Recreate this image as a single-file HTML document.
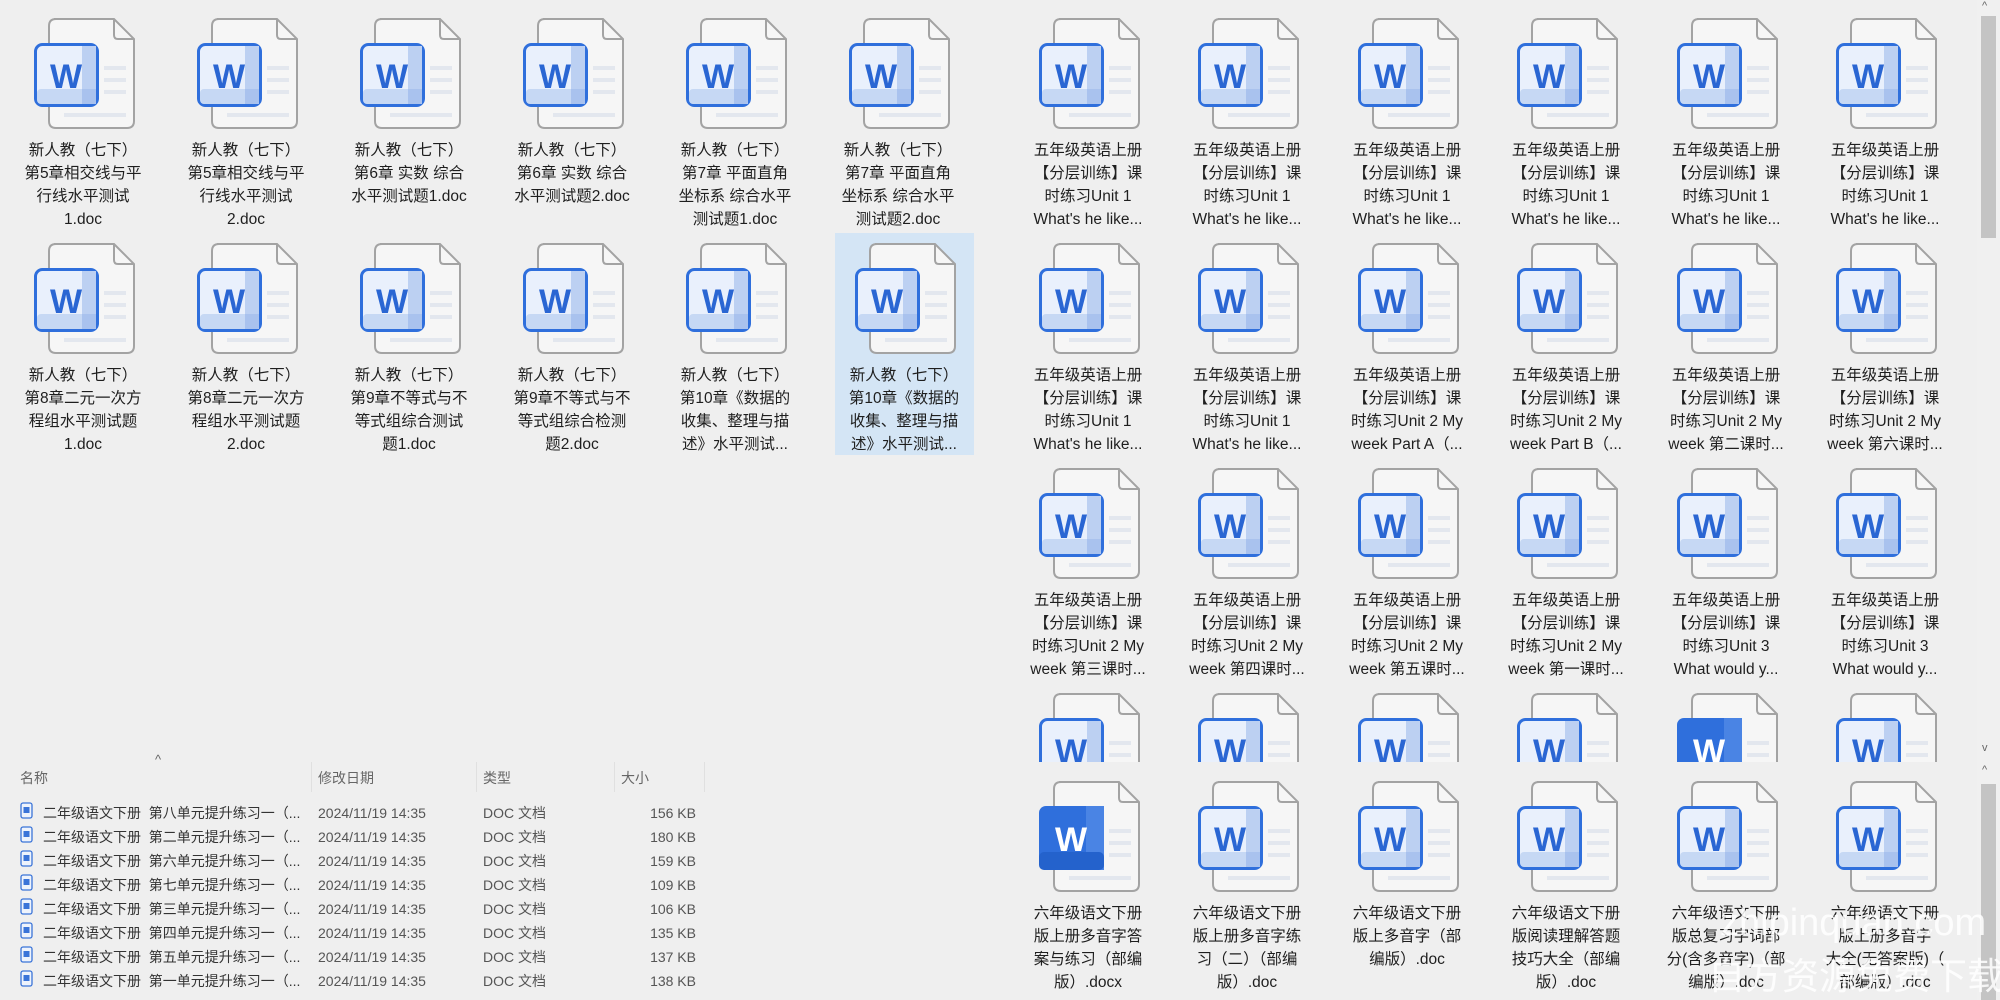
<!DOCTYPE html>
<html><head><meta charset="utf-8"><style>
*{margin:0;padding:0;box-sizing:border-box}
body{width:2000px;height:1000px;background:#efefef;position:relative;overflow:hidden;font-family:"Liberation Sans","Noto Sans CJK SC",sans-serif;color:#1e1e1e}
.p{position:absolute;overflow:hidden}
.c{position:absolute;width:140px;height:220px}
.c svg{position:absolute;left:21px;top:0;width:104px;height:112px;overflow:visible}
.t{position:absolute;left:0;top:121px;width:140px;text-align:center;font-size:15.5px;line-height:23px;white-space:nowrap}
.lst{position:absolute;font-size:14px;color:#333;white-space:nowrap}
.hd{position:absolute;font-size:14px;color:#666}
.sep{position:absolute;top:762px;width:1px;height:30px;background:#e0e0e0}
</style></head><body>
<svg width="0" height="0" style="position:absolute">
<defs>
<g id="doc">
<path d="M20 1 H80 L100 21 V103 Q100 110 93 110 H22 Q15 110 15 103 V8 Q15 1 22 1 Z" fill="#f6f6f6" stroke="#a3a3a3" stroke-width="2"/>
<path d="M80 1 V17 Q80 21 84 21 H100" fill="none" stroke="#a3a3a3" stroke-width="2"/>
<path d="M70 50H92M70 62H92M70 74H92M30 97H92" stroke="#e3e7ee" stroke-width="4"/>
</g>
<g id="bdg">
<rect x="1.5" y="26.5" width="62" height="61" rx="7" fill="#e9f0fc" stroke="#2f6fdc" stroke-width="3"/>
<rect x="48" y="28" width="14" height="58" fill="#bcd0f2"/>
<rect x="3" y="71" width="59" height="15" rx="4" fill="#c6d8f4"/>
<rect x="48" y="71" width="14" height="15" fill="#a9c2ee"/>
</g>
<g id="bds">
<rect x="0" y="25" width="65" height="64" rx="7" fill="#2f6fdc"/>
<rect x="47" y="25" width="18" height="64" fill="#4a84e4"/>
<rect x="0" y="71" width="65" height="18" rx="5" fill="#2462cc"/>
</g>
<g id="li"><rect x="1" y="1" width="11" height="15" rx="2" fill="#eef3fc" stroke="#3a74d8" stroke-width="1.3"/><rect x="3.5" y="5" width="6" height="6" fill="#3a74d8"/></g>
</defs></svg>

<!-- LEFT TOP PANEL -->
<div class="p" style="left:0;top:0;width:1000px;height:750px">
<div class="c" style="left:13px;top:18px"><svg><use href="#doc"/><use href="#bdg"/><text x="32" y="70" text-anchor="middle" font-size="34" font-weight="bold" fill="#2a66d3" font-family="Liberation Sans">W</text></svg><div class="t">新人教（七下）<br>第5章相交线与平<br>行线水平测试<br>1.doc</div></div>
<div class="c" style="left:176px;top:18px"><svg><use href="#doc"/><use href="#bdg"/><text x="32" y="70" text-anchor="middle" font-size="34" font-weight="bold" fill="#2a66d3" font-family="Liberation Sans">W</text></svg><div class="t">新人教（七下）<br>第5章相交线与平<br>行线水平测试<br>2.doc</div></div>
<div class="c" style="left:339px;top:18px"><svg><use href="#doc"/><use href="#bdg"/><text x="32" y="70" text-anchor="middle" font-size="34" font-weight="bold" fill="#2a66d3" font-family="Liberation Sans">W</text></svg><div class="t">新人教（七下）<br>第6章 实数 综合<br>水平测试题1.doc</div></div>
<div class="c" style="left:502px;top:18px"><svg><use href="#doc"/><use href="#bdg"/><text x="32" y="70" text-anchor="middle" font-size="34" font-weight="bold" fill="#2a66d3" font-family="Liberation Sans">W</text></svg><div class="t">新人教（七下）<br>第6章 实数 综合<br>水平测试题2.doc</div></div>
<div class="c" style="left:665px;top:18px"><svg><use href="#doc"/><use href="#bdg"/><text x="32" y="70" text-anchor="middle" font-size="34" font-weight="bold" fill="#2a66d3" font-family="Liberation Sans">W</text></svg><div class="t">新人教（七下）<br>第7章 平面直角<br>坐标系 综合水平<br>测试题1.doc</div></div>
<div class="c" style="left:828px;top:18px"><svg><use href="#doc"/><use href="#bdg"/><text x="32" y="70" text-anchor="middle" font-size="34" font-weight="bold" fill="#2a66d3" font-family="Liberation Sans">W</text></svg><div class="t">新人教（七下）<br>第7章 平面直角<br>坐标系 综合水平<br>测试题2.doc</div></div>

<div style="position:absolute;left:835px;top:233px;width:139px;height:222px;background:#d4e5f5"></div>
<div class="c" style="left:13px;top:243px"><svg><use href="#doc"/><use href="#bdg"/><text x="32" y="70" text-anchor="middle" font-size="34" font-weight="bold" fill="#2a66d3" font-family="Liberation Sans">W</text></svg><div class="t">新人教（七下）<br>第8章二元一次方<br>程组水平测试题<br>1.doc</div></div>
<div class="c" style="left:176px;top:243px"><svg><use href="#doc"/><use href="#bdg"/><text x="32" y="70" text-anchor="middle" font-size="34" font-weight="bold" fill="#2a66d3" font-family="Liberation Sans">W</text></svg><div class="t">新人教（七下）<br>第8章二元一次方<br>程组水平测试题<br>2.doc</div></div>
<div class="c" style="left:339px;top:243px"><svg><use href="#doc"/><use href="#bdg"/><text x="32" y="70" text-anchor="middle" font-size="34" font-weight="bold" fill="#2a66d3" font-family="Liberation Sans">W</text></svg><div class="t">新人教（七下）<br>第9章不等式与不<br>等式组综合测试<br>题1.doc</div></div>
<div class="c" style="left:502px;top:243px"><svg><use href="#doc"/><use href="#bdg"/><text x="32" y="70" text-anchor="middle" font-size="34" font-weight="bold" fill="#2a66d3" font-family="Liberation Sans">W</text></svg><div class="t">新人教（七下）<br>第9章不等式与不<br>等式组综合检测<br>题2.doc</div></div>
<div class="c" style="left:665px;top:243px"><svg><use href="#doc"/><use href="#bdg"/><text x="32" y="70" text-anchor="middle" font-size="34" font-weight="bold" fill="#2a66d3" font-family="Liberation Sans">W</text></svg><div class="t">新人教（七下）<br>第10章《数据的<br>收集、整理与描<br>述》水平测试...</div></div>
<div class="c" style="left:834px;top:243px"><svg><use href="#doc"/><use href="#bdg"/><text x="32" y="70" text-anchor="middle" font-size="34" font-weight="bold" fill="#2a66d3" font-family="Liberation Sans">W</text></svg><div class="t">新人教（七下）<br>第10章《数据的<br>收集、整理与描<br>述》水平测试...</div></div>
</div>

<!-- LEFT LOWER LIST -->
<div class="hd" style="left:20px;top:768px">名称</div>
<div class="hd" style="left:155px;top:752px;font-size:13px">^</div>
<div class="hd" style="left:318px;top:768px">修改日期</div>
<div class="hd" style="left:483px;top:768px">类型</div>
<div class="hd" style="left:621px;top:768px">大小</div>
<div class="sep" style="left:311px"></div><div class="sep" style="left:476px"></div><div class="sep" style="left:614px"></div><div class="sep" style="left:704px"></div>

<svg style="position:absolute;left:20px;top:802px" width="14" height="190">
<use href="#li"/><use href="#li" y="24"/><use href="#li" y="48"/><use href="#li" y="72"/><use href="#li" y="96"/><use href="#li" y="120"/><use href="#li" y="144"/><use href="#li" y="168"/>
</svg>
<div class="lst" style="left:43px;top:801px;line-height:24px">二年级语文下册&nbsp; 第八单元提升练习一（...<br>二年级语文下册&nbsp; 第二单元提升练习一（...<br>二年级语文下册&nbsp; 第六单元提升练习一（...<br>二年级语文下册&nbsp; 第七单元提升练习一（...<br>二年级语文下册&nbsp; 第三单元提升练习一（...<br>二年级语文下册&nbsp; 第四单元提升练习一（...<br>二年级语文下册&nbsp; 第五单元提升练习一（...<br>二年级语文下册&nbsp; 第一单元提升练习一（...</div>
<div class="lst" style="left:318px;top:801px;line-height:24px;color:#555">2024/11/19 14:35<br>2024/11/19 14:35<br>2024/11/19 14:35<br>2024/11/19 14:35<br>2024/11/19 14:35<br>2024/11/19 14:35<br>2024/11/19 14:35<br>2024/11/19 14:35</div>
<div class="lst" style="left:483px;top:801px;line-height:24px;color:#555">DOC 文档<br>DOC 文档<br>DOC 文档<br>DOC 文档<br>DOC 文档<br>DOC 文档<br>DOC 文档<br>DOC 文档</div>
<div class="lst" style="left:600px;width:96px;text-align:right;top:801px;line-height:24px;color:#555">156 KB<br>180 KB<br>159 KB<br>109 KB<br>106 KB<br>135 KB<br>137 KB<br>138 KB</div>

<!-- RIGHT UPPER PANEL -->
<div class="p" style="left:1000px;top:0;width:1000px;height:762px">
<div class="c" style="left:18px;top:18px"><svg><use href="#doc"/><use href="#bdg"/><text x="32" y="70" text-anchor="middle" font-size="34" font-weight="bold" fill="#2a66d3" font-family="Liberation Sans">W</text></svg><div class="t">五年级英语上册<br>【分层训练】课<br>时练习Unit 1<br>What's he like...</div></div>
<div class="c" style="left:177px;top:18px"><svg><use href="#doc"/><use href="#bdg"/><text x="32" y="70" text-anchor="middle" font-size="34" font-weight="bold" fill="#2a66d3" font-family="Liberation Sans">W</text></svg><div class="t">五年级英语上册<br>【分层训练】课<br>时练习Unit 1<br>What's he like...</div></div>
<div class="c" style="left:337px;top:18px"><svg><use href="#doc"/><use href="#bdg"/><text x="32" y="70" text-anchor="middle" font-size="34" font-weight="bold" fill="#2a66d3" font-family="Liberation Sans">W</text></svg><div class="t">五年级英语上册<br>【分层训练】课<br>时练习Unit 1<br>What's he like...</div></div>
<div class="c" style="left:496px;top:18px"><svg><use href="#doc"/><use href="#bdg"/><text x="32" y="70" text-anchor="middle" font-size="34" font-weight="bold" fill="#2a66d3" font-family="Liberation Sans">W</text></svg><div class="t">五年级英语上册<br>【分层训练】课<br>时练习Unit 1<br>What's he like...</div></div>
<div class="c" style="left:656px;top:18px"><svg><use href="#doc"/><use href="#bdg"/><text x="32" y="70" text-anchor="middle" font-size="34" font-weight="bold" fill="#2a66d3" font-family="Liberation Sans">W</text></svg><div class="t">五年级英语上册<br>【分层训练】课<br>时练习Unit 1<br>What's he like...</div></div>
<div class="c" style="left:815px;top:18px"><svg><use href="#doc"/><use href="#bdg"/><text x="32" y="70" text-anchor="middle" font-size="34" font-weight="bold" fill="#2a66d3" font-family="Liberation Sans">W</text></svg><div class="t">五年级英语上册<br>【分层训练】课<br>时练习Unit 1<br>What's he like...</div></div>

<div class="c" style="left:18px;top:243px"><svg><use href="#doc"/><use href="#bdg"/><text x="32" y="70" text-anchor="middle" font-size="34" font-weight="bold" fill="#2a66d3" font-family="Liberation Sans">W</text></svg><div class="t">五年级英语上册<br>【分层训练】课<br>时练习Unit 1<br>What's he like...</div></div>
<div class="c" style="left:177px;top:243px"><svg><use href="#doc"/><use href="#bdg"/><text x="32" y="70" text-anchor="middle" font-size="34" font-weight="bold" fill="#2a66d3" font-family="Liberation Sans">W</text></svg><div class="t">五年级英语上册<br>【分层训练】课<br>时练习Unit 1<br>What's he like...</div></div>
<div class="c" style="left:337px;top:243px"><svg><use href="#doc"/><use href="#bdg"/><text x="32" y="70" text-anchor="middle" font-size="34" font-weight="bold" fill="#2a66d3" font-family="Liberation Sans">W</text></svg><div class="t">五年级英语上册<br>【分层训练】课<br>时练习Unit 2 My<br>week Part A（...</div></div>
<div class="c" style="left:496px;top:243px"><svg><use href="#doc"/><use href="#bdg"/><text x="32" y="70" text-anchor="middle" font-size="34" font-weight="bold" fill="#2a66d3" font-family="Liberation Sans">W</text></svg><div class="t">五年级英语上册<br>【分层训练】课<br>时练习Unit 2 My<br>week Part B（...</div></div>
<div class="c" style="left:656px;top:243px"><svg><use href="#doc"/><use href="#bdg"/><text x="32" y="70" text-anchor="middle" font-size="34" font-weight="bold" fill="#2a66d3" font-family="Liberation Sans">W</text></svg><div class="t">五年级英语上册<br>【分层训练】课<br>时练习Unit 2 My<br>week 第二课时...</div></div>
<div class="c" style="left:815px;top:243px"><svg><use href="#doc"/><use href="#bdg"/><text x="32" y="70" text-anchor="middle" font-size="34" font-weight="bold" fill="#2a66d3" font-family="Liberation Sans">W</text></svg><div class="t">五年级英语上册<br>【分层训练】课<br>时练习Unit 2 My<br>week 第六课时...</div></div>

<div class="c" style="left:18px;top:468px"><svg><use href="#doc"/><use href="#bdg"/><text x="32" y="70" text-anchor="middle" font-size="34" font-weight="bold" fill="#2a66d3" font-family="Liberation Sans">W</text></svg><div class="t">五年级英语上册<br>【分层训练】课<br>时练习Unit 2 My<br>week 第三课时...</div></div>
<div class="c" style="left:177px;top:468px"><svg><use href="#doc"/><use href="#bdg"/><text x="32" y="70" text-anchor="middle" font-size="34" font-weight="bold" fill="#2a66d3" font-family="Liberation Sans">W</text></svg><div class="t">五年级英语上册<br>【分层训练】课<br>时练习Unit 2 My<br>week 第四课时...</div></div>
<div class="c" style="left:337px;top:468px"><svg><use href="#doc"/><use href="#bdg"/><text x="32" y="70" text-anchor="middle" font-size="34" font-weight="bold" fill="#2a66d3" font-family="Liberation Sans">W</text></svg><div class="t">五年级英语上册<br>【分层训练】课<br>时练习Unit 2 My<br>week 第五课时...</div></div>
<div class="c" style="left:496px;top:468px"><svg><use href="#doc"/><use href="#bdg"/><text x="32" y="70" text-anchor="middle" font-size="34" font-weight="bold" fill="#2a66d3" font-family="Liberation Sans">W</text></svg><div class="t">五年级英语上册<br>【分层训练】课<br>时练习Unit 2 My<br>week 第一课时...</div></div>
<div class="c" style="left:656px;top:468px"><svg><use href="#doc"/><use href="#bdg"/><text x="32" y="70" text-anchor="middle" font-size="34" font-weight="bold" fill="#2a66d3" font-family="Liberation Sans">W</text></svg><div class="t">五年级英语上册<br>【分层训练】课<br>时练习Unit 3<br>What would y...</div></div>
<div class="c" style="left:815px;top:468px"><svg><use href="#doc"/><use href="#bdg"/><text x="32" y="70" text-anchor="middle" font-size="34" font-weight="bold" fill="#2a66d3" font-family="Liberation Sans">W</text></svg><div class="t">五年级英语上册<br>【分层训练】课<br>时练习Unit 3<br>What would y...</div></div>

<div class="c" style="left:18px;top:693px"><svg><use href="#doc"/><use href="#bdg"/><text x="32" y="70" text-anchor="middle" font-size="34" font-weight="bold" fill="#2a66d3" font-family="Liberation Sans">W</text></svg></div>
<div class="c" style="left:177px;top:693px"><svg><use href="#doc"/><use href="#bdg"/><text x="32" y="70" text-anchor="middle" font-size="34" font-weight="bold" fill="#2a66d3" font-family="Liberation Sans">W</text></svg></div>
<div class="c" style="left:337px;top:693px"><svg><use href="#doc"/><use href="#bdg"/><text x="32" y="70" text-anchor="middle" font-size="34" font-weight="bold" fill="#2a66d3" font-family="Liberation Sans">W</text></svg></div>
<div class="c" style="left:496px;top:693px"><svg><use href="#doc"/><use href="#bdg"/><text x="32" y="70" text-anchor="middle" font-size="34" font-weight="bold" fill="#2a66d3" font-family="Liberation Sans">W</text></svg></div>
<div class="c" style="left:656px;top:693px"><svg><use href="#doc"/><use href="#bds"/><text x="32" y="70" text-anchor="middle" font-size="34" font-weight="bold" fill="#fff" font-family="Liberation Sans">W</text></svg></div>
<div class="c" style="left:815px;top:693px"><svg><use href="#doc"/><use href="#bdg"/><text x="32" y="70" text-anchor="middle" font-size="34" font-weight="bold" fill="#2a66d3" font-family="Liberation Sans">W</text></svg></div>
<div style="position:absolute;left:977px;top:0;width:23px;height:762px;background:#f0f0f0"></div>
<div style="position:absolute;left:981px;top:16px;width:15px;height:222px;background:#c4c4c4"></div>
<div style="position:absolute;left:982px;top:0;font-size:11px;color:#666">^</div>
<div style="position:absolute;left:982px;top:742px;font-size:11px;color:#666">v</div>
</div>

<!-- RIGHT LOWER PANEL -->
<div class="p" style="left:1000px;top:762px;width:1000px;height:238px">
<div class="c" style="left:18px;top:19px"><svg><use href="#doc"/><use href="#bds"/><text x="32" y="70" text-anchor="middle" font-size="34" font-weight="bold" fill="#fff" font-family="Liberation Sans">W</text></svg><div class="t">六年级语文下册<br>版上册多音字答<br>案与练习（部编<br>版）.docx</div></div>
<div class="c" style="left:177px;top:19px"><svg><use href="#doc"/><use href="#bdg"/><text x="32" y="70" text-anchor="middle" font-size="34" font-weight="bold" fill="#2a66d3" font-family="Liberation Sans">W</text></svg><div class="t">六年级语文下册<br>版上册多音字练<br>习（二）（部编<br>版）.doc</div></div>
<div class="c" style="left:337px;top:19px"><svg><use href="#doc"/><use href="#bdg"/><text x="32" y="70" text-anchor="middle" font-size="34" font-weight="bold" fill="#2a66d3" font-family="Liberation Sans">W</text></svg><div class="t">六年级语文下册<br>版上多音字（部<br>编版）.doc</div></div>
<div class="c" style="left:496px;top:19px"><svg><use href="#doc"/><use href="#bdg"/><text x="32" y="70" text-anchor="middle" font-size="34" font-weight="bold" fill="#2a66d3" font-family="Liberation Sans">W</text></svg><div class="t">六年级语文下册<br>版阅读理解答题<br>技巧大全（部编<br>版）.doc</div></div>
<div class="c" style="left:656px;top:19px"><svg><use href="#doc"/><use href="#bdg"/><text x="32" y="70" text-anchor="middle" font-size="34" font-weight="bold" fill="#2a66d3" font-family="Liberation Sans">W</text></svg><div class="t">六年级语文下册<br>版总复习字词部<br>分(含多音字)（部<br>编版）.doc</div></div>
<div class="c" style="left:815px;top:19px"><svg><use href="#doc"/><use href="#bdg"/><text x="32" y="70" text-anchor="middle" font-size="34" font-weight="bold" fill="#2a66d3" font-family="Liberation Sans">W</text></svg><div class="t">六年级语文下册<br>版上册多音字<br>大全(无答案版)（<br>部编版）.doc</div></div>
<div style="position:absolute;left:977px;top:0;width:23px;height:238px;background:#f0f0f0"></div>
<div style="position:absolute;left:982px;top:2px;font-size:11px;color:#666">^</div>
<div style="position:absolute;left:981px;top:22px;width:15px;height:216px;background:#c4c4c4"></div>
</div>

<div style="position:absolute;left:1720px;top:902px;font-size:38px;color:rgba(255,255,255,0.85);font-family:'Liberation Sans',sans-serif;white-space:nowrap">zhipinquan.com</div>
<div style="position:absolute;left:1708px;top:950px;font-size:37px;color:rgba(255,255,255,0.85);font-family:'Noto Sans CJK SC',sans-serif;white-space:nowrap;line-height:46px">自方资源免费下载</div>
</body></html>
